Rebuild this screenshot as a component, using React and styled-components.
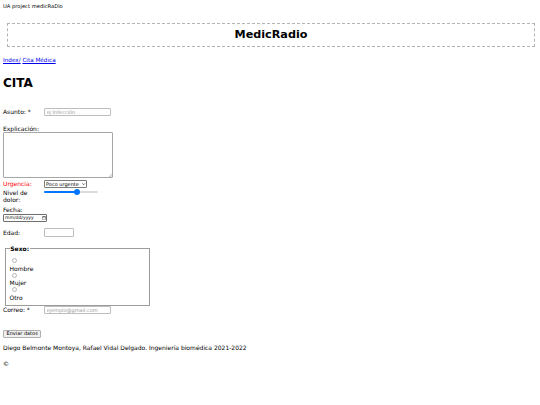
import React from 'react'
import styled, { createGlobalStyle } from 'styled-components'

const GlobalStyle = createGlobalStyle`
  body {
    margin: 3px;
    font-family: "DejaVu Sans", Verdana, sans-serif;
    font-size: 6px;
    line-height: 7px;
    color: #000;
    background: #fff;
  }
`

const controlFont = `
  font-family: "DejaVu Sans", Verdana, sans-serif;
  font-size: 5px;
  color: #000;
`

const TopLine = styled.div`
  font-size: 5.2px;
  line-height: 7px;
`

const HeaderBox = styled.header`
  margin: 13px 2px 0 4px;
  padding: 4px 0;
  border: 1px dashed #b4b4b4;
  text-align: center;
`

const SiteTitle = styled.h1`
  margin: 0;
  font-size: 11.2px;
  line-height: 14px;
  font-weight: bold;
`

const Crumbs = styled.nav`
  margin-top: 10px;
  font-size: 5.7px;
`

const Crumb = styled.a`
  color: #0000ee;
  text-decoration: underline;
`

const PageTitle = styled.h2`
  margin: 12px 0 0;
  font-size: 12px;
  line-height: 14px;
  font-weight: bold;
`

const Form = styled.form`
  margin-top: 18px;
`

const Row = styled.div`
  display: flex;
  align-items: baseline;
  margin-top: ${(p) => p.$mt || 0}px;
`

const Label = styled.label`
  flex: 0 0 37.5px;
  margin-right: 3.5px;
  color: ${(p) => (p.$warn ? 'red' : 'inherit')};
`

const BlockLabel = styled.label`
  display: block;
  margin-top: ${(p) => p.$mt || 0}px;
`

const TextInput = styled.input`
  ${controlFont}
  box-sizing: border-box;
  width: ${(p) => p.$w || 67}px;
  height: ${(p) => p.$h || 8}px;
  margin: 0;
  padding: 0 1.5px;
  border: 1px solid #bdbdbd;
  border-radius: 1px;
  outline: none;
  &::placeholder {
    color: #9a9a9a;
  }
  &::-webkit-inner-spin-button,
  &::-webkit-outer-spin-button {
    -webkit-appearance: none;
    margin: 0;
  }
`

const AreaWrap = styled.div`
  position: relative;
  width: 110px;
`

const TextArea = styled.textarea`
  ${controlFont}
  display: block;
  box-sizing: border-box;
  width: 110px;
  height: 46px;
  margin: 0.5px 0 0;
  padding: 1px;
  border: 1px solid #a6a6a6;
  border-radius: 1px;
  resize: none;
`

const Grip = styled.svg`
  position: absolute;
  right: 1.5px;
  bottom: 1.5px;
`

const SelectWrap = styled.span`
  position: relative;
  display: inline-flex;
`

const Select = styled.select`
  ${controlFont}
  box-sizing: border-box;
  width: 43px;
  height: 8px;
  margin: 0;
  padding: 0 0 0 1px;
  border: 1px solid #7a7a7a;
  border-radius: 1px;
  background: #fff;
  appearance: none;
  line-height: 6px;
`

const Chevron = styled.svg`
  position: absolute;
  right: 1.5px;
  top: 3px;
  pointer-events: none;
`

const Range = styled.input`
  appearance: none;
  width: 54px;
  height: 6px;
  margin: 0;
  background: transparent;
  &::-webkit-slider-runnable-track {
    height: 2px;
    border-radius: 1px;
    background: linear-gradient(
      to right,
      #0075ff ${(p) => p.$fill}%,
      #dcdcdc ${(p) => p.$fill}%
    );
  }
  &::-webkit-slider-thumb {
    appearance: none;
    width: 6px;
    height: 6px;
    margin-top: -2px;
    border-radius: 50%;
    background: #0075ff;
    border: none;
  }
`

const DateInput = styled.input`
  ${controlFont}
  display: block;
  box-sizing: border-box;
  width: 44px;
  height: 7.5px;
  margin: 1.5px 0 0;
  padding: 0 0.5px 0 1px;
  font-size: 4.6px;
  border: 1px solid #6e6e6e;
  border-radius: 1px;
  line-height: 5px;
  &::-webkit-datetime-edit,
  &::-webkit-datetime-edit-fields-wrapper {
    padding: 0;
  }
  &::-webkit-datetime-edit-month-field,
  &::-webkit-datetime-edit-day-field,
  &::-webkit-datetime-edit-year-field {
    padding: 0;
  }
  &::-webkit-calendar-picker-indicator {
    width: 4px;
    height: 4px;
    margin: 0 0 0 auto;
    padding: 0;
  }
`

const Group = styled.fieldset`
  box-sizing: border-box;
  width: 145px;
  margin: 7.5px 0 0 2px;
  padding: 5.5px 3.5px 4.5px;
  border: 1px solid #9c9c9c;
`

const Legend = styled.legend`
  padding: 0 0.75px;
  font-weight: bold;
`

const Option = styled.div`
  display: flex;
  flex-direction: column;
  align-items: flex-start;
`

const Radio = styled.input`
  appearance: none;
  box-sizing: border-box;
  width: 5px;
  height: 5px;
  margin: 1px 0 1.5px 2px;
  border: 1px solid #b5b5b5;
  border-radius: 50%;
  background: #fff;
`

const SendButton = styled.button`
  ${controlFont}
  display: block;
  box-sizing: border-box;
  height: 7.5px;
  margin-top: 16px;
  padding: 0 2.5px;
  line-height: 5.5px;
  background: #efefef;
  border: 1px solid #b0b0b0;
  border-radius: 1px;
`

const FootLine = styled.p`
  margin: ${(p) => p.$mt}px 0 0;
`

const sexes = ['Hombre', 'Mujer', 'Otro']

const App = () => (
  <>
    <GlobalStyle />
    <TopLine>UA project medicRaDio</TopLine>
    <HeaderBox>
      <SiteTitle>MedicRadio</SiteTitle>
    </HeaderBox>
    <Crumbs>
      <Crumb href="#index">Index/</Crumb>{' '}
      <Crumb href="#cita">Cita Médica</Crumb>
    </Crumbs>
    <PageTitle>CITA</PageTitle>
    <Form onSubmit={(e) => e.preventDefault()}>
      <Row>
        <Label htmlFor="asunto">Asunto: *</Label>
        <TextInput id="asunto" type="text" placeholder="ej:Infección" />
      </Row>
      <BlockLabel $mt={8.5} htmlFor="explicacion">
        Explicación:
      </BlockLabel>
      <AreaWrap>
        <TextArea id="explicacion" />
        <Grip width="3" height="3" viewBox="0 0 6 6">
          <path d="M6 0L0 6M6 3L3 6" stroke="#8a8a8a" strokeWidth="1" />
        </Grip>
      </AreaWrap>
      <Row $mt={2}>
        <Label $warn htmlFor="urgencia">
          Urgencia:
        </Label>
        <SelectWrap>
          <Select id="urgencia" defaultValue="poco">
            <option value="poco">Poco urgente</option>
            <option value="urgente">Urgente</option>
            <option value="muy">Muy urgente</option>
          </Select>
          <Chevron width="3.5" height="2.2" viewBox="0 0 7 4.4">
            <path d="M0.6 0.6L3.5 3.5L6.4 0.6" fill="none" stroke="#111" strokeWidth="1.2" />
          </Chevron>
        </SelectWrap>
      </Row>
      <Row $mt={0.5}>
        <Label htmlFor="dolor">Nivel de dolor:</Label>
        <Range id="dolor" type="range" min="0" max="100" defaultValue="62" $fill={62} />
      </Row>
      <BlockLabel $mt={3} htmlFor="fecha">
        Fecha:
      </BlockLabel>
      <DateInput id="fecha" type="date" />
      <Row $mt={6.5}>
        <Label htmlFor="edad">Edad:</Label>
        <TextInput id="edad" type="number" $w={29.5} $h={9.4} />
      </Row>
      <Group>
        <Legend>Sexo:</Legend>
        {sexes.map((s) => (
          <Option key={s}>
            <Radio type="radio" name="sexo" id={s} value={s} />
            <label htmlFor={s}>{s}</label>
          </Option>
        ))}
      </Group>
      <Row>
        <Label htmlFor="correo">Correo: *</Label>
        <TextInput id="correo" type="email" placeholder="ejemplo@gmail.com" />
      </Row>
      <SendButton type="submit">Enviar datos</SendButton>
    </Form>
    <FootLine $mt={6.5}>
      Diego Belmonte Montoya, Rafael Vidal Delgado. Ingeniería biomédica
      2021-2022
    </FootLine>
    <FootLine $mt={8.5}>©</FootLine>
  </>
)

export default App
